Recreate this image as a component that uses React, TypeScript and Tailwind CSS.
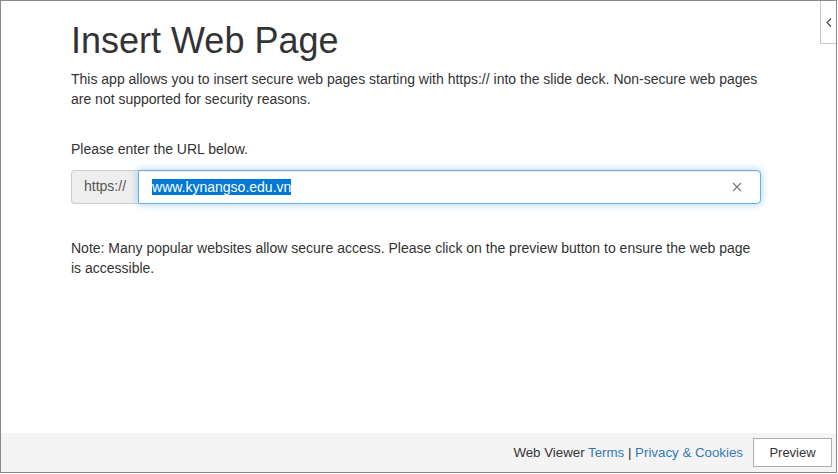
import React from "react";

const font = { fontFamily: '"Liberation Sans", Arial, sans-serif' };

const ClearIcon = () => (
  <svg width="10" height="10" viewBox="0 0 10 10" className="text-[#777]">
    <path d="M1 1 L9 9 M9 1 L1 9" stroke="currentColor" strokeWidth="1.1" fill="none" />
  </svg>
);

const UrlInput: React.FC<{ value: string }> = ({ value }) => (
  <div className="flex h-[34px] w-[690px]">
    <div className="flex items-center px-3 border border-[#ccc] border-r-0 bg-[#eee] rounded-l text-[14px] text-[#555]">
      https://
    </div>
    <div className="flex-1 flex items-center border border-[#66afe9] rounded-r pl-[13px] pr-[18px] bg-white shadow-[inset_0_1px_1px_rgba(0,0,0,0.075),0_0_8px_rgba(102,175,233,0.6)]">
      <span className="bg-[#0078d7] text-white text-[14px] leading-[14px] py-[1px]">{value}</span>
      <div className="flex-1" />
      <ClearIcon />
    </div>
  </div>
);

export default function App() {
  return (
    <div className="w-[838px] h-[474px] bg-white text-[#333]" style={font}>
      <div className="relative w-[837px] h-[473px] border border-[#8a8a8a] flex flex-col">
        <div className="absolute top-0 right-0 w-[16px] h-[43px] border-l border-b border-[#c8c8c8] bg-white flex items-center justify-center">
          <svg width="6" height="9" viewBox="0 0 6 9">
            <path d="M5 0.5 L1 4.5 L5 8.5" stroke="#444" strokeWidth="1.1" fill="none" />
          </svg>
        </div>

        <div className="flex-1 pl-[70px]">
          <h1 className="mt-[20px] mb-[8px] text-[36px] leading-[1.1] font-normal">Insert Web Page</h1>
          <p className="w-[690px] text-[14px] leading-[20px]">
            This app allows you to insert secure web pages starting with https:// into the slide deck. Non-secure web pages are not supported for security reasons.
          </p>
          <p className="mt-[30px] mb-[11px] text-[14px] leading-[20px]">Please enter the URL below.</p>
          <UrlInput value="www.kynangso.edu.vn" />
          <p className="mt-[34px] w-[690px] text-[14px] leading-[20px]">
            Note: Many popular websites allow secure access. Please click on the preview button to ensure the web page is accessible.
          </p>
        </div>

        <div className="h-[39px] bg-[#f4f4f4] flex items-center justify-end pr-[4px] gap-[10px] text-[13.3px]">
          <span>
            Web Viewer <a className="text-[#337ab7]">Terms</a> | <a className="text-[#337ab7]">Privacy &amp; Cookies</a>
          </span>
          <button className="w-[79px] h-[29px] bg-white border border-[#adadad] text-[13px] text-[#333]" style={font}>
            Preview
          </button>
        </div>
      </div>
    </div>
  );
}
